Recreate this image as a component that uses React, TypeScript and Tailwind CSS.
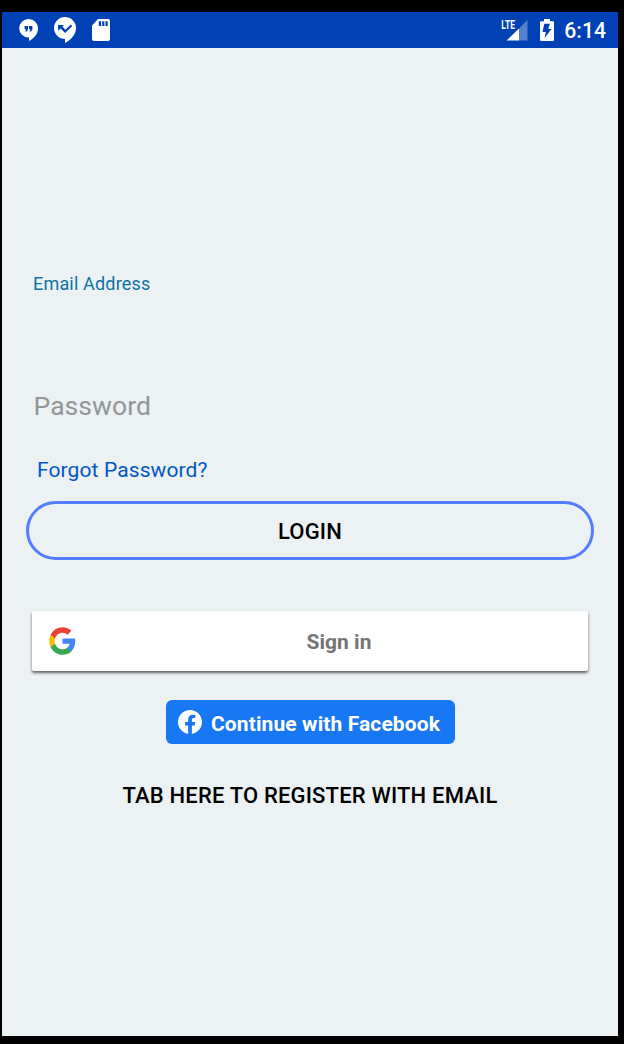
import React from "react";

function StatusBar() {
  return (
    <header className="flex h-9 shrink-0 items-center justify-between bg-[#0041b5] pl-[17px] pr-[12px] text-white">
      <div className="flex items-center">
        <svg className="h-[22px] w-[19px]" viewBox="0 0 19 22" fill="none">
          <path d="M9.5 0A9.3 9.3 0 0 0 9.5 18.6h.5V22c5-2.6 9-7 9-12.5A9.4 9.4 0 0 0 9.5 0Z" fill="#fff" />
          <path d="M5.600 7h3.400v3.400L7.700 12.500H6.200l.8-2.200H5.600ZM10 7h3.400v3.400L12.100 12.500h-1.500l.8-2.200H10Z" fill="#0041b5" />
        </svg>
        <svg className="ml-4 h-[26px] w-[22px]" viewBox="0 0 22 26" fill="none">
          <path d="M11 0a11 11 0 0 0 0 22v4c6-3 11-8.500 11-15A11 11 0 0 0 11 0Z" fill="#fff" />
          <path d="M4 8h6L8.400 9.600l2.900 3.200L16.800 7.500l1.500 1.600-7.200 7L6.600 11.400 4.200 13.800Z" fill="#0041b5" />
        </svg>
        <svg className="ml-4 h-[22px] w-[18px]" viewBox="0 0 18 22" fill="none">
          <path d="M6 0h10a2 2 0 0 1 2 2v18a2 2 0 0 1-2 2H2a2 2 0 0 1-2-2V6.500Z" fill="#fff" />
          <path d="M6.800 2.300h2.300v4.700H6.800ZM10.200 2.300h2.200v4.700h-2.200ZM13.500 2.300h2.200v4.700h-2.200Z" fill="#0041b5" />
        </svg>
      </div>
      <div className="flex items-center">
        <svg className="h-[28px] w-[27px]" viewBox="0 -3 27 28" fill="none">
          <path d="M26.500 1v20.500H18V9.500Z" fill="#5582d0" />
          <path d="M18 9.500v12H5.500Z" fill="#fff" />
          <text x="0.300" y="10" fill="#fff" textLength="13.800" lengthAdjust="spacingAndGlyphs" className="font-[Roboto,sans-serif] text-[13px] font-bold">
            LTE
          </text>
        </svg>
        <svg className="ml-3 h-[22px] w-[14px]" viewBox="0 0 14 22" fill="none">
          <path d="M4 0h6v2.200h2.700A1.300 1.300 0 0 1 14 3.500v17.200a1.300 1.300 0 0 1-1.300 1.300H1.300A1.300 1.300 0 0 1 0 20.700V3.500a1.300 1.300 0 0 1 1.300-1.300H4Z" fill="#fff" />
          <path d="M9.800 4.800 8.300 10h3.200L4.600 19l1.200-6H2.500l1.800-8.200Z" fill="#0041b5" />
        </svg>
        <span className="ml-2.5 pt-0.5 text-[21.200px] leading-[34px] font-medium">6:14</span>
      </div>
    </header>
  );
}

function GoogleLogo() {
  return (
    <svg className="h-[30px] w-[29px]" viewBox="0 0 24 24" preserveAspectRatio="none">
      <path fill="#4285F4" d="M22.560 12.250c0-.78-.07-1.530-.2-2.250H12v4.260h5.920c-.26 1.370-1.040 2.530-2.210 3.310v2.770h3.570c2.080-1.920 3.280-4.740 3.280-8.090z" />
      <path fill="#34A853" d="M12 23c2.970 0 5.460-.98 7.280-2.660l-3.570-2.770c-.98.66-2.230 1.060-3.710 1.060-2.860 0-5.290-1.930-6.160-4.530H2.180v2.840C3.990 20.530 7.700 23 12 23z" />
      <path fill="#FBBC05" d="M5.840 14.090c-.22-.66-.35-1.360-.35-2.090s.13-1.430.35-2.090V7.070H2.180C1.430 8.550 1 10.220 1 12s.43 3.450 1.180 4.930l3.660-2.840z" />
      <path fill="#EA4335" d="M12 5.380c1.620 0 3.060.56 4.210 1.640l3.150-3.150C17.450 2.090 14.970 1 12 1 7.700 1 3.990 3.470 2.180 7.070l3.660 2.840c.87-2.600 3.300-4.530 6.160-4.530z" />
    </svg>
  );
}

function FacebookLogo() {
  return (
    <svg className="h-6 w-6" viewBox="0 0 24 24" fill="#fff">
      <path d="M24 12.073c0-6.627-5.373-12-12-12s-12 5.373-12 12c0 5.990 4.388 10.954 10.125 11.854v-8.385H7.078v-3.470h3.047V9.430c0-3.007 1.792-4.669 4.533-4.669 1.312 0 2.686.235 2.686.235v2.953H15.830c-1.491 0-1.956.925-1.956 1.874v2.250h3.328l-.532 3.470h-2.796v8.385C19.612 23.027 24 18.062 24 12.073z" />
    </svg>
  );
}

export default function App() {
  return (
    <div className="h-[1044px] w-[624px] bg-black pt-3 pr-1.5 pb-2 pl-0.5 font-[Roboto,sans-serif]">
      <div className="flex h-full flex-col bg-[#ecf1f4]">
        <StatusBar />
        <main className="flex flex-col whitespace-nowrap">
          <label className="mt-[224px] ml-[31px] text-[18px] leading-6 tracking-[0.180px] text-[#0c73a3]">Email Address</label>
          <label className="mt-[94px] ml-[31.500px] text-[26.500px] leading-8 tracking-[0.050px] text-[#929697]">Password</label>
          <a className="mt-9 ml-[35px] self-start text-[21px] leading-6 tracking-[0.110px] text-[#0057c2]">Forgot Password?</a>
          <button className="mt-[19px] mr-6 ml-6 h-[59px] rounded-full border-3 border-[#527dff] pt-0.5 text-[22px] font-medium tracking-[0.170px] text-black">
            LOGIN
          </button>
          <button className="mt-[51px] mr-[30px] ml-[30px] flex h-[60px] items-center rounded-[2px] bg-white pl-4 shadow-[0_2px_3px_rgba(0,0,0,0.6)]">
            <GoogleLogo />
            <span className="flex-1 pt-1 pl-[13px] text-center text-[21px] font-bold text-[#757575]">Sign in</span>
          </button>
          <button className="mt-[29px] flex h-11 w-[289px] items-center self-center rounded-[6px] bg-[#1877f2] pl-3 text-[21px] font-bold text-white">
            <FacebookLogo />
            <span className="ml-[9.500px] pt-[5px] tracking-[0.110px]">Continue with Facebook</span>
          </button>
          <button className="mt-9 text-center text-[22px] leading-8 font-medium tracking-[0.170px] text-black">TAB HERE TO REGISTER WITH EMAIL</button>
        </main>
      </div>
    </div>
  );
}
